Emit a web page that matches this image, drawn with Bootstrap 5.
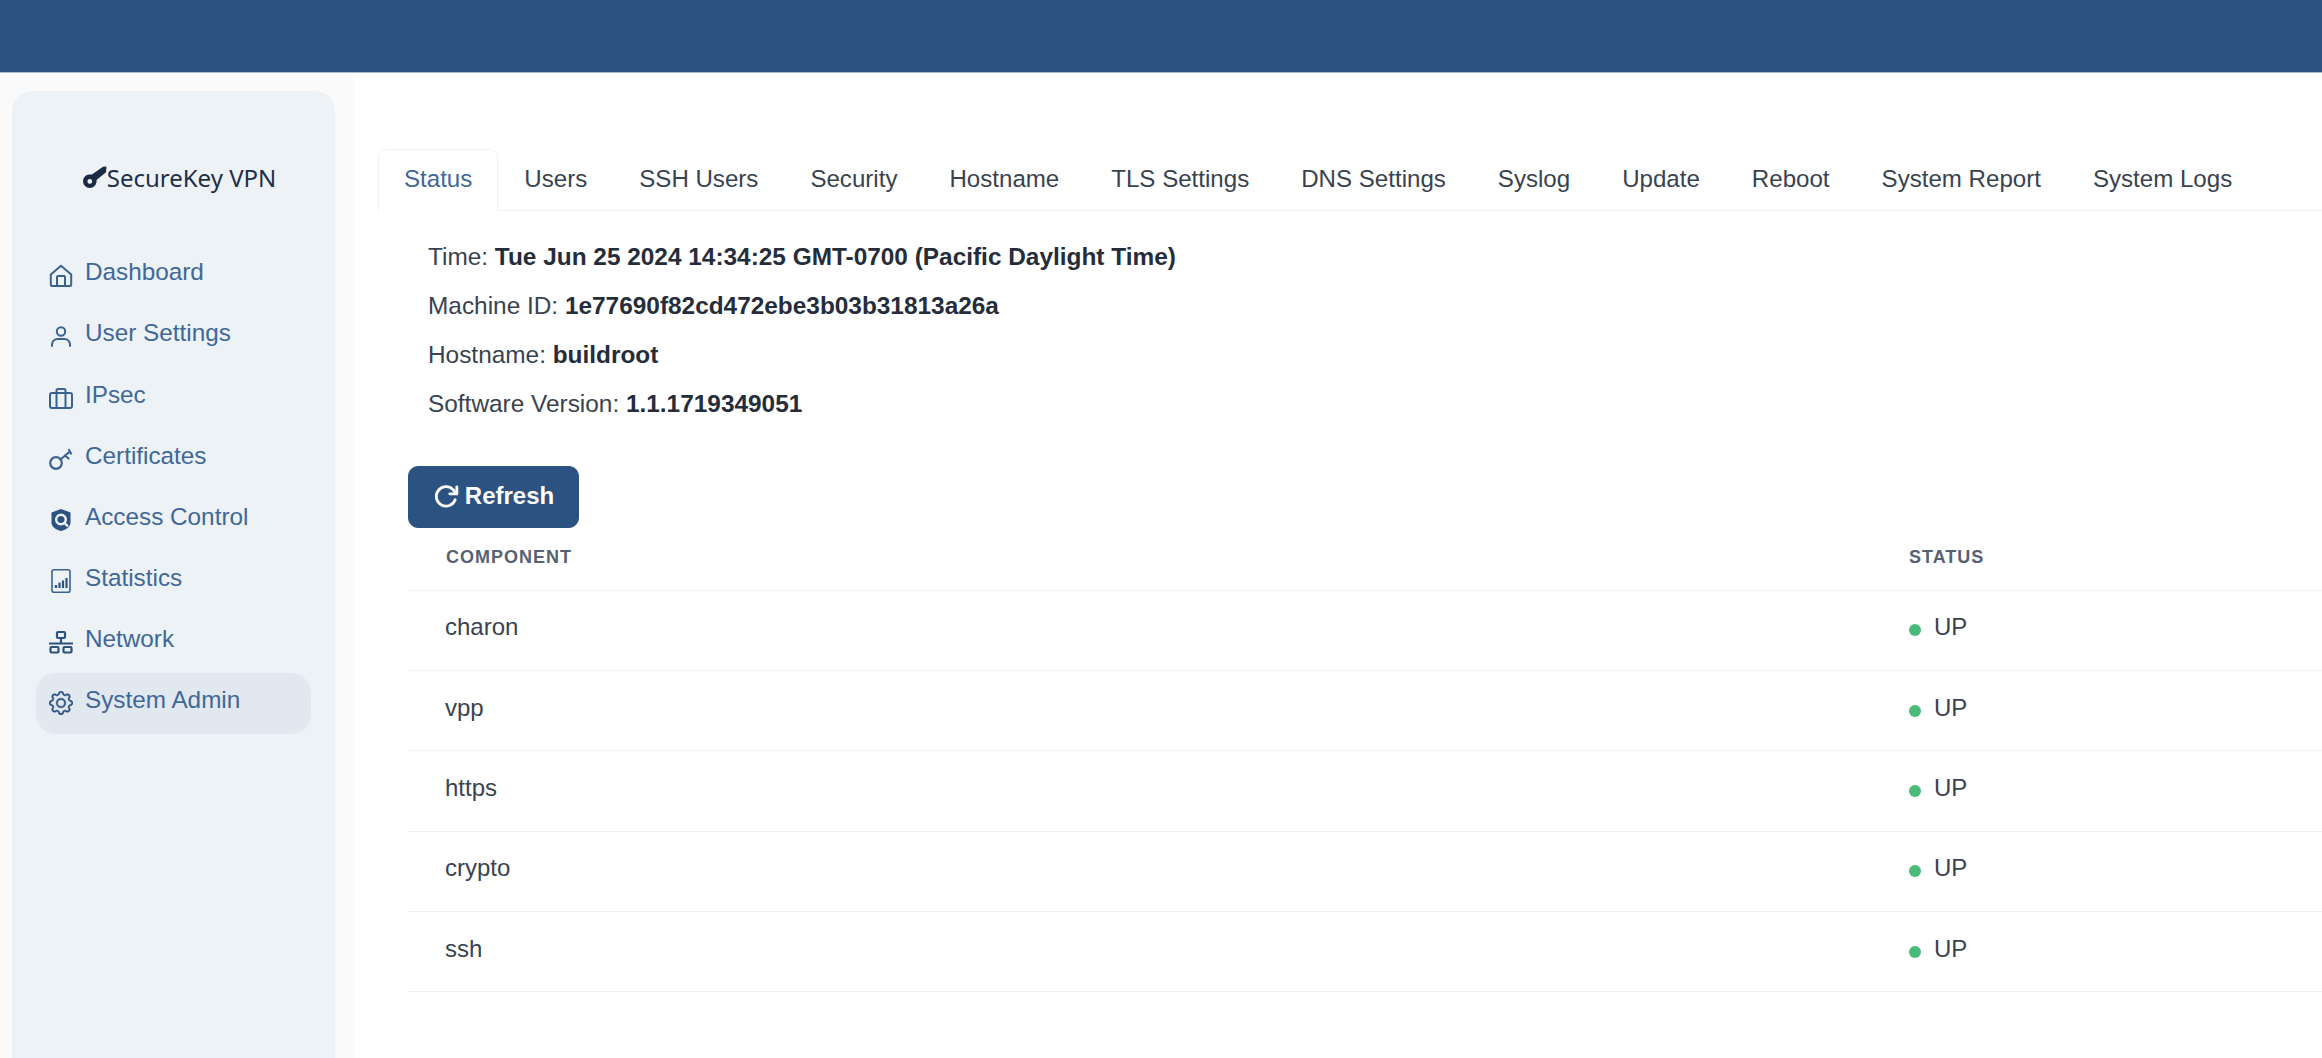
<!DOCTYPE html>
<html lang="en">
<head>
  <meta charset="UTF-8" />
  <meta name="viewport" content="width=device-width, initial-scale=1.0"/>
  <title>SecureKey VPN</title>
  <link href="https://cdn.jsdelivr.net/npm/bootstrap@5.3.0/dist/css/bootstrap.min.css" rel="stylesheet"/>
  <style>
    html, body {
      height: 100%;
    }
    body {
      font-family: "Liberation Sans", Arial, sans-serif;
      font-size: 24px;
      color: #39434f;
      background: #fff;
      overflow: hidden;
    }
    .top-bar {
      height: 73px;
      background: #2c5282;
      border-bottom: 1px solid #a9bcd3;
      flex-shrink: 0;
    }
    .side-wrap {
      width: 354px;
      flex-shrink: 0;
      background: #fafafa;
      padding: 18px 19px 0 12px;
    }
    .side-panel {
      height: 100%;
      background: #edf2f7;
      border-radius: 20px 20px 0 0;
      padding: 0 24px;
    }
    .side-logo {
      height: 154px;
      padding: 20px 0 0 12px;
      font-family: "Noto Sans", sans-serif;
      font-size: 24px;
      color: #1f2f46;
    }
    .side-logo svg {
      width: 24px;
      height: 24px;
      margin-top: -4px;
    }
    .side-link {
      height: 61.1px;
      padding: 0 0 0 13px;
      color: #3f6897;
      font-size: 24.3px;
      border-radius: 20px;
      gap: 12px;
      text-decoration: none;
    }
    .side-link span {
      margin-bottom: 6px;
    }
    .side-link svg {
      width: 24px;
      height: 24px;
      flex-shrink: 0;
    }
    .side-link.is-on {
      background: #e2e8f0;
    }
    .main-pane {
      padding: 76px 0 0 24px;
      min-width: 0;
    }
    .nav-tabs {
      border-bottom: 1px solid #edf2f7;
      flex-wrap: nowrap;
    }
    .nav-tabs .nav-link {
      font-size: 24.1px;
      line-height: 36px;
      padding: 11px 25px 13px;
      color: #39434f;
      border-radius: 9px 9px 0 0;
      white-space: nowrap;
    }
    .nav-tabs .nav-link.active {
      color: #3f6897;
      border-color: #edf2f7 #edf2f7 #fff;
    }
    .info-block {
      padding: 28px 0 0 50px;
      font-size: 24.4px;
    }
    .info-block p {
      margin-bottom: 13px;
      line-height: 36px;
    }
    .info-block b {
      color: #252d3b;
    }
    .btn-refresh {
      margin: 44px 0 0 30px;
      width: 171px;
      height: 62px;
      padding: 0 0 2px;
      background: #2c5282;
      border: 1px solid #2c5282;
      color: #fff;
      font-size: 24px;
      font-weight: 700;
      border-radius: 10px;
      gap: 6px;
    }
    .btn-refresh:hover {
      background: #2c5282;
      color: #fff;
    }
    .btn-refresh svg {
      width: 26px;
      height: 26px;
    }
    .comp-wrap {
      padding-left: 30px;
    }
    .comp-table {
      margin: 0;
      table-layout: fixed;
    }
    .comp-table th {
      height: 62px;
      padding: 0 38px 3px;
      font-size: 18px;
      letter-spacing: 1px;
      color: #566173;
      text-transform: uppercase;
      vertical-align: middle;
      border-bottom: 1px solid #edf2f7;
    }
    .comp-table th:first-child {
      width: 1463px;
    }
    .comp-table td {
      height: 80.4px;
      padding: 0 38px 6px;
      font-size: 24px;
      color: #39434f;
      vertical-align: middle;
      border-bottom: 1px solid #edf2f7;
    }
    .comp-table td:first-child {
      padding-left: 37px;
    }
    .up-dot {
      display: inline-block;
      width: 12px;
      height: 12px;
      border-radius: 50%;
      background: #48bb78;
      margin-right: 13px;
      vertical-align: -1px;
    }
  </style>
</head>
<body class="d-flex flex-column">
  <div class="top-bar"></div>

  <div class="d-flex flex-grow-1" style="min-height: 0">
    <aside class="side-wrap">
      <div class="side-panel">
        <div class="side-logo d-flex align-items-center justify-content-center">
          <svg viewBox="0 0 24 24" fill="#1a2c44">
            <path d="M8 10.5a6.8 6.8 0 1 0 5.5 5.500L23 8.200l.500-5.700-3.500.300L8.900 10.600zM6.800 15a2.400 2.400 0 1 1 0 4.800 2.400 2.400 0 0 1 0-4.800z" fill-rule="evenodd"/>
          </svg>
          <span>SecureKey VPN</span>
        </div>

        <nav class="d-flex flex-column">
          <a class="side-link d-flex align-items-center" href="#">
            <svg viewBox="0 0 24 24" fill="none" stroke="#3a6291" stroke-width="2" stroke-linejoin="round" stroke-linecap="round">
              <path d="M1.800 10.500 12 1.800l10.200 8.700v10.300a1.200 1.200 0 0 1-1.200 1.200H3a1.200 1.200 0 0 1-1.200-1.200z"/>
              <path d="M8 22V13a1 1 0 0 1 1-1h6a1 1 0 0 1 1 1v9"/>
            </svg>
            <span>Dashboard</span>
          </a>
          <a class="side-link d-flex align-items-center" href="#">
            <svg viewBox="0 0 24 24" fill="none" stroke="#3a6291" stroke-width="2" stroke-linecap="round">
              <circle cx="12" cy="6.500" r="4.200"/>
              <path d="M3 21v-1.500a5.500 5.500 0 0 1 5.500-5.500h7a5.500 5.500 0 0 1 5.500 5.500V21"/>
            </svg>
            <span>User Settings</span>
          </a>
          <a class="side-link d-flex align-items-center" href="#">
            <svg viewBox="0 0 24 24" fill="none" stroke="#3a6291" stroke-width="2" stroke-linejoin="round">
              <rect x="1" y="7" width="22" height="15" rx="2"/>
              <path d="M7.500 22V4.500a1.500 1.500 0 0 1 1.500-1.500h6a1.500 1.500 0 0 1 1.500 1.500V22"/>
            </svg>
            <span>IPsec</span>
          </a>
          <a class="side-link d-flex align-items-center" href="#">
            <svg viewBox="0 0 24 24" fill="none" stroke="#3a6291" stroke-width="2.200" stroke-linecap="round">
              <circle cx="7" cy="16" r="5.800"/>
              <path d="M11.500 12.500 21 4.500M16 8.500l3.500 3M20 3l2 3.500"/>
            </svg>
            <span>Certificates</span>
          </a>
          <a class="side-link d-flex align-items-center" href="#">
            <svg viewBox="0 0 24 24">
              <path fill="#2c5282" d="M12 1 21.500 4.500v10c0 4-4.500 7.500-9.500 8.500-5-1-9.500-4.500-9.500-8.500v-10z"/>
              <circle cx="12" cy="11.500" r="4.800" fill="none" stroke="#edf2f7" stroke-width="2.400"/>
              <path d="M15.500 15 19 18.500" stroke="#edf2f7" stroke-width="2.400"/>
            </svg>
            <span>Access Control</span>
          </a>
          <a class="side-link d-flex align-items-center" href="#">
            <svg viewBox="0 0 24 24" fill="none" stroke="#3a6291" stroke-width="1.600">
              <rect x="3" y="0.800" width="18" height="22.400" rx="2"/>
              <path d="M7.500 16v3M11 13.500V19M14.500 11.500V19M18 9v10" stroke="#2c5282" stroke-width="2.200" transform="translate(-0.500)"/>
            </svg>
            <span>Statistics</span>
          </a>
          <a class="side-link d-flex align-items-center" href="#">
            <svg viewBox="0 0 24 24" fill="none" stroke="#2c5282" stroke-width="2.200">
              <rect x="8" y="2" width="8" height="6" rx="1"/>
              <path d="M12 8v6M0 13.500h24"/>
              <rect x="1.500" y="17" width="8" height="5.500" rx="1"/>
              <rect x="14.500" y="17" width="8" height="5.500" rx="1"/>
            </svg>
            <span>Network</span>
          </a>
          <a class="side-link is-on d-flex align-items-center" href="#">
            <svg viewBox="0 0 16 16" fill="#2c5282" stroke="#2c5282" stroke-width="0.300">
              <path d="M8 4.754a3.246 3.246 0 1 0 0 6.492 3.246 3.246 0 0 0 0-6.492zM5.754 8a2.246 2.246 0 1 1 4.492 0 2.246 2.246 0 0 1-4.492 0z"/>
              <path d="M9.796 1.343c-.527-1.79-3.065-1.79-3.592 0l-.094.319a.873.873 0 0 1-1.255.52l-.292-.16c-1.64-.892-3.433.902-2.54 2.541l.159.292a.873.873 0 0 1-.52 1.255l-.319.094c-1.79.527-1.79 3.065 0 3.592l.319.094a.873.873 0 0 1 .52 1.255l-.16.292c-.892 1.64.901 3.434 2.541 2.54l.292-.159a.873.873 0 0 1 1.255.52l.094.319c.527 1.79 3.065 1.79 3.592 0l.094-.319a.873.873 0 0 1 1.255-.52l.292.16c1.64.893 3.434-.902 2.54-2.541l-.159-.292a.873.873 0 0 1 .52-1.255l.319-.094c1.79-.527 1.79-3.065 0-3.592l-.319-.094a.873.873 0 0 1-.52-1.255l.16-.292c.893-1.64-.902-3.433-2.541-2.54l-.292.159a.873.873 0 0 1-1.255-.52l-.094-.319zm-2.633.283c.246-.835 1.428-.835 1.674 0l.094.319a1.873 1.873 0 0 0 2.693 1.115l.291-.16c.764-.415 1.6.42 1.184 1.185l-.159.292a1.873 1.873 0 0 0 1.116 2.692l.318.094c.835.246.835 1.428 0 1.674l-.319.094a1.873 1.873 0 0 0-1.115 2.693l.16.291c.415.764-.42 1.6-1.185 1.184l-.291-.159a1.873 1.873 0 0 0-2.693 1.116l-.094.318c-.246.835-1.428.835-1.674 0l-.094-.319a1.873 1.873 0 0 0-2.692-1.115l-.292.16c-.764.415-1.6-.42-1.184-1.185l.159-.291A1.873 1.873 0 0 0 1.945 8.93l-.319-.094c-.835-.246-.835-1.428 0-1.674l.319-.094A1.873 1.873 0 0 0 3.06 4.377l-.16-.292c-.415-.764.42-1.6 1.185-1.184l.292.159a1.873 1.873 0 0 0 2.692-1.115l.094-.319z"/>
            </svg>
            <span>System Admin</span>
          </a>
        </nav>
      </div>
    </aside>

    <main class="main-pane flex-grow-1">
      <ul class="nav nav-tabs">
        <li class="nav-item"><a class="nav-link active" href="#">Status</a></li>
        <li class="nav-item"><a class="nav-link" href="#">Users</a></li>
        <li class="nav-item"><a class="nav-link" href="#">SSH Users</a></li>
        <li class="nav-item"><a class="nav-link" href="#">Security</a></li>
        <li class="nav-item"><a class="nav-link" href="#">Hostname</a></li>
        <li class="nav-item"><a class="nav-link" href="#">TLS Settings</a></li>
        <li class="nav-item"><a class="nav-link" href="#">DNS Settings</a></li>
        <li class="nav-item"><a class="nav-link" href="#">Syslog</a></li>
        <li class="nav-item"><a class="nav-link" href="#">Update</a></li>
        <li class="nav-item"><a class="nav-link" href="#">Reboot</a></li>
        <li class="nav-item"><a class="nav-link" href="#">System Report</a></li>
        <li class="nav-item"><a class="nav-link" href="#">System Logs</a></li>
      </ul>

      <div class="info-block">
        <p>Time: <b>Tue Jun 25 2024 14:34:25 GMT-0700 (Pacific Daylight Time)</b></p>
        <p>Machine ID: <b>1e77690f82cd472ebe3b03b31813a26a</b></p>
        <p>Hostname: <b>buildroot</b></p>
        <p>Software Version: <b>1.1.1719349051</b></p>
      </div>

      <button type="button" class="btn btn-refresh d-flex align-items-center justify-content-center">
        <svg viewBox="0 0 24 24" fill="none" stroke="#fff" stroke-width="2.600" stroke-linecap="round" stroke-linejoin="round">
          <path d="M22 3.500V10h-6.500"/>
          <path d="M20.500 15.500a9 9 0 1 1-2.100-9.500L22 10"/>
        </svg>
        <span>Refresh</span>
      </button>

      <div class="comp-wrap">
        <table class="table comp-table">
          <thead>
            <tr><th>Component</th><th>Status</th></tr>
          </thead>
          <tbody>
            <tr><td>charon</td><td><span class="up-dot"></span>UP</td></tr>
            <tr><td>vpp</td><td><span class="up-dot"></span>UP</td></tr>
            <tr><td>https</td><td><span class="up-dot"></span>UP</td></tr>
            <tr><td>crypto</td><td><span class="up-dot"></span>UP</td></tr>
            <tr><td>ssh</td><td><span class="up-dot"></span>UP</td></tr>
          </tbody>
        </table>
      </div>
    </main>
  </div>

  <script src="https://cdn.jsdelivr.net/npm/bootstrap@5.3.0/dist/js/bootstrap.bundle.min.js"></script>
</body>
</html>
